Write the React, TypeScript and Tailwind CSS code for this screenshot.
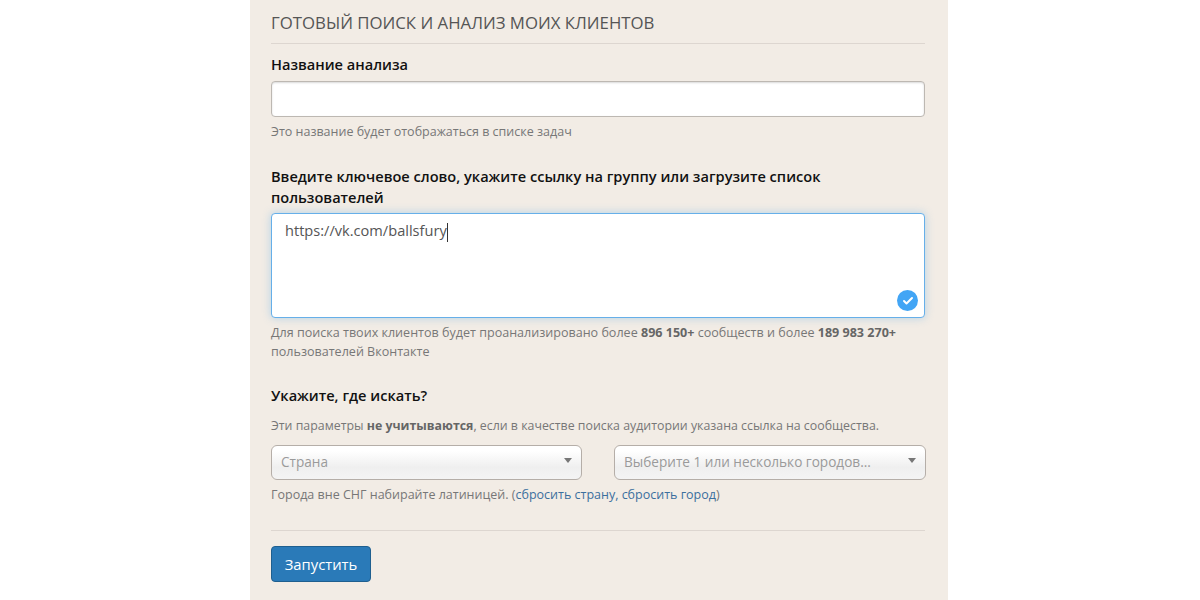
import { Check } from "lucide-react";

const Arrow = () => (
  <span className="w-0 h-0 border-l-[4px] border-r-[4px] border-t-[5px] border-l-transparent border-r-transparent border-t-[#777]" />
);

const FakeSelect = ({ text, className }: { text: string; className: string }) => (
  <div
    className={`h-[35px] flex items-center justify-between pl-[9px] pr-[9px] rounded-[6px] border border-[#b5aea8] bg-gradient-to-b from-white from-[15%] via-[#efefef] via-[65%] to-[#f4f4f4] text-[13.6px] text-[#9a9a9a] ${className}`}
  >
    <span>{text}</span>
    <span className="-mt-[4px] flex"><Arrow /></span>
  </div>
);

export default function App() {
  return (
    <div className="h-[600px] w-[1200px] overflow-hidden bg-white font-['Open_Sans',sans-serif]">
      <div className="ml-[250px] h-full w-[698px] bg-[#f2ece5] pl-[21px] pr-[23px] pt-[12px]">
        <h3 className="text-[16.8px] leading-[22px] text-[#555] pb-[9px] border-b border-[#ddd6d0]">
          ГОТОВЫЙ ПОИСК И АНАЛИЗ МОИХ КЛИЕНТОВ
        </h3>

        <label className="block mt-[10px] text-[14.6px] leading-[21px] font-semibold text-[#111]">Название анализа</label>
        <div className="mt-[6px] h-[36px] rounded-[4px] border border-[#bdb8b2] bg-white shadow-[inset_0_1px_2px_rgba(0,0,0,0.15)]" />
        <p className="mt-[6px] text-[12.5px] leading-[18px] text-[#777]">Это название будет отображаться в списке задач</p>

        <label className="block mt-[25px] text-[14.6px] leading-[21px] font-semibold text-[#111]">
          Введите ключевое слово, укажите ссылку на группу или загрузите список пользователей
        </label>
        <div className="relative mt-[5px] h-[105px] rounded-[4px] border border-[#66afe9] bg-white pl-[13px] pt-[6px] text-[14.6px] leading-[20px] text-[#555] shadow-[0_0_8px_rgba(102,175,233,0.45)]">
          https://vk.com/ballsfury<span className="inline-block w-px h-[19px] align-middle bg-[#333]" />
          <span className="absolute right-[6px] bottom-[6px] flex h-[21px] w-[21px] items-center justify-center rounded-full bg-[#42a5f5]">
            <Check className="h-[12px] w-[12px] text-white" strokeWidth={4} />
          </span>
        </div>
        <p className="mt-[5px] text-[12.55px] leading-[19px] text-[#777]">
          Для поиска твоих клиентов будет проанализировано более <b className="text-[#666]">896 150+</b> сообществ и более{" "}
          <b className="text-[#666]">189 983 270+</b> пользователей Вконтакте
        </p>

        <label className="block mt-[24px] text-[14.6px] leading-[21px] font-semibold text-[#111]">Укажите, где искать?</label>
        <p className="mt-[11px] text-[12.36px] leading-[18px] text-[#777]">
          Эти параметры <b className="text-[#666]">не учитываются</b>, если в качестве поиска аудитории указана ссылка на сообщества.
        </p>

        <div className="mt-[10px] flex w-[655px] justify-between">
          <FakeSelect text="Страна" className="w-[311px]" />
          <FakeSelect text="Выберите 1 или несколько городов..." className="w-[312px]" />
        </div>
        <p className="mt-[6px] text-[12.5px] leading-[18px] text-[#777]">
          Города вне СНГ набирайте латиницей. (<span className="text-[#3b6f9e]">сбросить страну, сбросить город</span>)
        </p>

        <div className="mt-[26px] border-t border-[#ddd6d0] pt-[15px]">
          <button className="h-[36px] w-[100px] rounded-[4px] border border-[#1f5f8f] bg-[#2a7ab8] text-[14.8px] text-white">
            Запустить
          </button>
        </div>
      </div>
    </div>
  );
}
